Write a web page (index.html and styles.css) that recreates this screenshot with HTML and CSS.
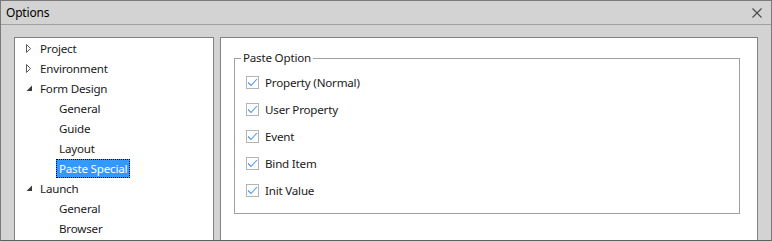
FILE: index.html
```html
<!DOCTYPE html>
<html>

<head>
	<link rel="stylesheet" href="styles.css">
</head>

<body>
	<div class="window">
		<div class="titlebar">
			<span class="title">Options</span>
			<svg class="close" width="10" height="10" viewBox="0 0 10 10">
				<path d="M0.5 0.5 L9.5 9.5 M9.5 0.5 L0.5 9.5" stroke="#4d4d4d" stroke-width="1.2" fill="none" />
			</svg>
		</div>

		<div class="content">
			<ul class="tree">
				<li class="node">
					<svg class="twist" width="11" height="11" viewBox="0 0 11 11"><path d="M0.5 1.5 L4.5 5.5 L0.5 9.5 Z" stroke="#5a5a5a" fill="none" /></svg>
					<span class="label">Project</span>
				</li>
				<li class="node">
					<svg class="twist" width="11" height="11" viewBox="0 0 11 11"><path d="M0.5 1.5 L4.5 5.5 L0.5 9.5 Z" stroke="#5a5a5a" fill="none" /></svg>
					<span class="label">Environment</span>
				</li>
				<li class="node">
					<svg class="twist" width="11" height="11" viewBox="0 0 11 11"><polygon points="6,2.5 6,8 0.5,8" fill="#3c3c3c" /></svg>
					<span class="label">Form Design</span>
				</li>
				<li class="node child"><span class="label">General</span></li>
				<li class="node child"><span class="label">Guide</span></li>
				<li class="node child"><span class="label">Layout</span></li>
				<li class="node child"><span class="label selected">Paste Special</span></li>
				<li class="node">
					<svg class="twist" width="11" height="11" viewBox="0 0 11 11"><polygon points="6,2.5 6,8 0.5,8" fill="#3c3c3c" /></svg>
					<span class="label">Launch</span>
				</li>
				<li class="node child"><span class="label">General</span></li>
				<li class="node child"><span class="label">Browser</span></li>
			</ul>

			<div class="page">
				<fieldset class="group">
					<legend>Paste Option</legend>
					<div class="option"><span class="check"><svg width="11" height="11" viewBox="0 0 11 11"><path d="M1 5.5 L4 8.5 L10 2" stroke="#4a97ee" stroke-width="1.1" fill="none" /></svg></span>Property (Normal)</div>
					<div class="option"><span class="check"><svg width="11" height="11" viewBox="0 0 11 11"><path d="M1 5.5 L4 8.5 L10 2" stroke="#4a97ee" stroke-width="1.1" fill="none" /></svg></span>User Property</div>
					<div class="option"><span class="check"><svg width="11" height="11" viewBox="0 0 11 11"><path d="M1 5.5 L4 8.5 L10 2" stroke="#4a97ee" stroke-width="1.1" fill="none" /></svg></span>Event</div>
					<div class="option"><span class="check"><svg width="11" height="11" viewBox="0 0 11 11"><path d="M1 5.5 L4 8.5 L10 2" stroke="#4a97ee" stroke-width="1.1" fill="none" /></svg></span>Bind Item</div>
					<div class="option"><span class="check"><svg width="11" height="11" viewBox="0 0 11 11"><path d="M1 5.5 L4 8.5 L10 2" stroke="#4a97ee" stroke-width="1.1" fill="none" /></svg></span>Init Value</div>
				</fieldset>
			</div>
		</div>
	</div>
</body>

</html>
```

FILE: styles.css
```css
body {
	margin: 0;
	padding: 0;
	font-family: "Noto Sans", "Open Sans", sans-serif;
	font-size: 11.6px;
	letter-spacing: -0.2px;
	color: #1a1a1a;
}

.window {
	width: 772px;
	height: 241px;
	box-sizing: border-box;
	border: 1px solid #7a7a7a;
	border-bottom-color: #5f5f5f;
	background: #d3d3d3;
	display: flex;
	flex-direction: column;
	overflow: hidden;
}

.titlebar {
	height: 23px;
	flex: none;
	border-bottom: 1px solid #a0a0a0;
	display: flex;
	align-items: center;
	justify-content: space-between;
	padding: 0 9px 0 5px;
}

.title {
	font-size: 12px;
	color: #000;
}

.content {
	flex: 1;
	min-height: 0;
	display: flex;
	gap: 6px;
	padding: 12px 13px 0 13px;
}

.tree {
	list-style: none;
	margin: 0;
	padding: 0;
	width: 200px;
	box-sizing: border-box;
	border: 1px solid #828282;
	border-bottom: none;
	background: #fff;
}

.node {
	height: 20px;
	display: flex;
	align-items: center;
	padding-left: 11px;
}

.node.child {
	padding-left: 41px;
}

.twist {
	flex: none;
	width: 11px;
	height: 11px;
}

.label {
	padding: 0 3px;
	line-height: 19px;
	white-space: nowrap;
}

.label.selected {
	background: #3399ff;
	color: #fff;
	outline: 1px dotted #000;
	outline-offset: -1px;
}

.page {
	width: 538px;
	box-sizing: border-box;
	border: 1px solid #828282;
	border-bottom: none;
	background: #fff;
}

.group {
	margin: 12px 0 0 13px;
	padding: 3px 0 0 11px;
	width: 506px;
	height: 164px;
	box-sizing: border-box;
	border: 1px solid #a0a0a0;
	min-inline-size: 0;
}

.group legend {
	margin-left: -5px;
	padding: 0 2px;
	line-height: 16px;
	color: #1a1a1a;
}

.option {
	height: 27px;
	display: flex;
	align-items: center;
}

.check {
	flex: none;
	width: 13px;
	height: 13px;
	box-sizing: border-box;
	border: 1px solid #b4b4b4;
	display: flex;
	align-items: center;
	justify-content: center;
	margin-right: 6px;
}
```
